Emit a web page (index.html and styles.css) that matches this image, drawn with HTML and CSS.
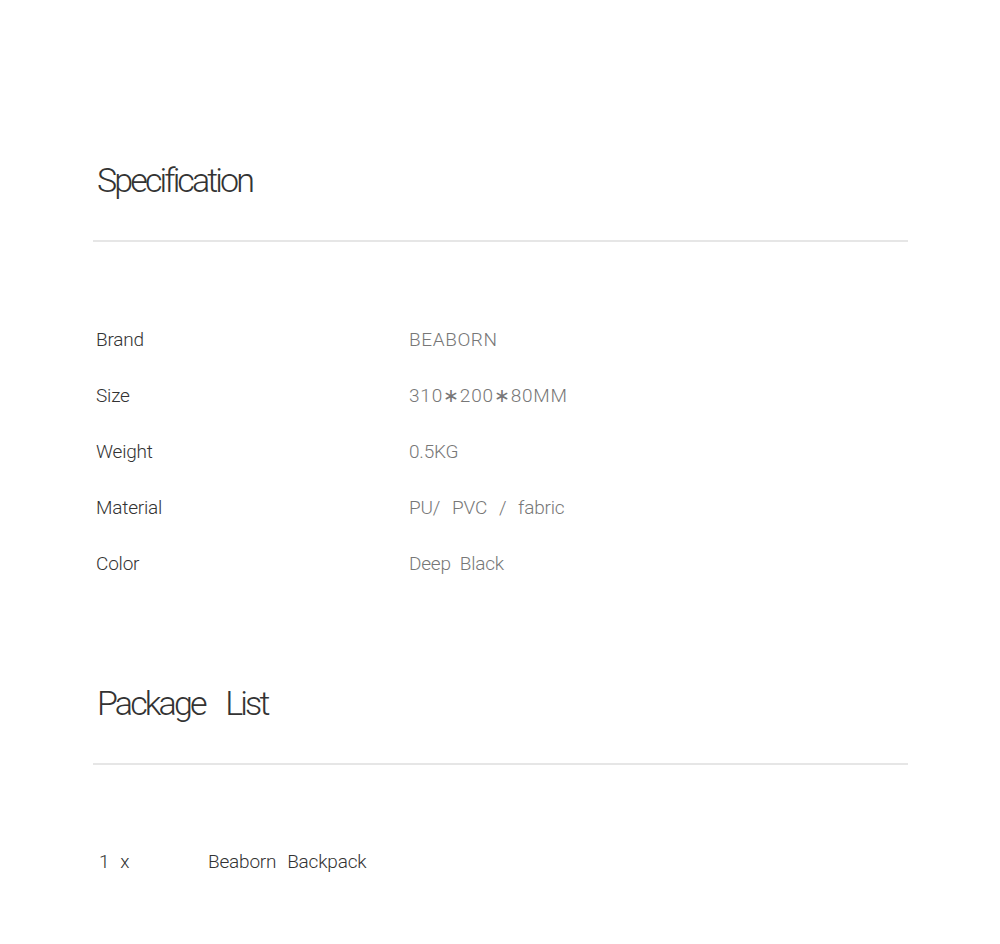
FILE: index.html
```html
<!DOCTYPE html>
<html lang="en">
<head>
    <meta charset="UTF-8">
    <meta name="viewport" content="width=device-width, initial-scale=1.0">
    <title>Specification</title>
    <link rel="stylesheet" href="styles.css">
</head>
<body>
    <div class="container">
        <div class="section spec">
            <h2 class="section-title">Specification</h2>
            <div class="divider"></div>
            <div class="spec-list">
                <div class="spec-row">
                    <span class="label">Brand</span>
                    <span class="value brand">BEABORN</span>
                </div>
                <div class="spec-row">
                    <span class="label">Size</span>
                    <span class="value size">310∗200∗80MM</span>
                </div>
                <div class="spec-row">
                    <span class="label">Weight</span>
                    <span class="value">0.5KG</span>
                </div>
                <div class="spec-row">
                    <span class="label">Material</span>
                    <span class="value material">PU/ &nbsp;PVC &nbsp;/ &nbsp;fabric</span>
                </div>
                <div class="spec-row">
                    <span class="label">Color</span>
                    <span class="value">Deep &nbsp;Black</span>
                </div>
            </div>
        </div>
        <div class="section package">
            <h2 class="section-title">Package &nbsp;List</h2>
            <div class="divider"></div>
            <div class="package-list">
                <div class="package-row">
                    <span class="qty">1 &nbsp;x</span>
                    <span class="item">Beaborn &nbsp;Backpack</span>
                </div>
            </div>
        </div>
    </div>
</body>
</html>
```

FILE: styles.css
```css
* {
    margin: 0;
    padding: 0;
    box-sizing: border-box;
}

body {
    font-family: Roboto, 'Liberation Sans', sans-serif;
    font-weight: 300;
    background: #ffffff;
    color: #333;
}

.container {
    width: 815px;
    margin-left: 93px;
    padding-top: 160px;
}

.section-title {
    font-size: 34px;
    font-weight: 300;
    line-height: 40px;
    letter-spacing: -2.9px;
    word-spacing: 5px;
    color: #333;
    padding-left: 4px;
}

.divider {
    height: 2px;
    background-color: #e6e6e6;
    margin-top: 40px;
}

.spec-list {
    margin-top: 70px;
}

.spec-row {
    display: flex;
    height: 56px;
    line-height: 56px;
    font-size: 19px;
    letter-spacing: -0.2px;
}

.label {
    width: 316px;
    padding-left: 3px;
    color: #333;
}

.value {
    color: #777;
}

.value.brand {
    letter-spacing: 0.6px;
}

.value.size {
    letter-spacing: 0.8px;
}

.value.material {
    word-spacing: 1.5px;
}

.package {
    margin-top: 91px;
}

.package-list {
    margin-top: 69px;
}

.package-row {
    display: flex;
    height: 56px;
    line-height: 56px;
    font-size: 19px;
    letter-spacing: -0.2px;
    word-spacing: 1px;
    color: #333;
}

.qty {
    width: 115px;
    padding-left: 6px;
}
```
